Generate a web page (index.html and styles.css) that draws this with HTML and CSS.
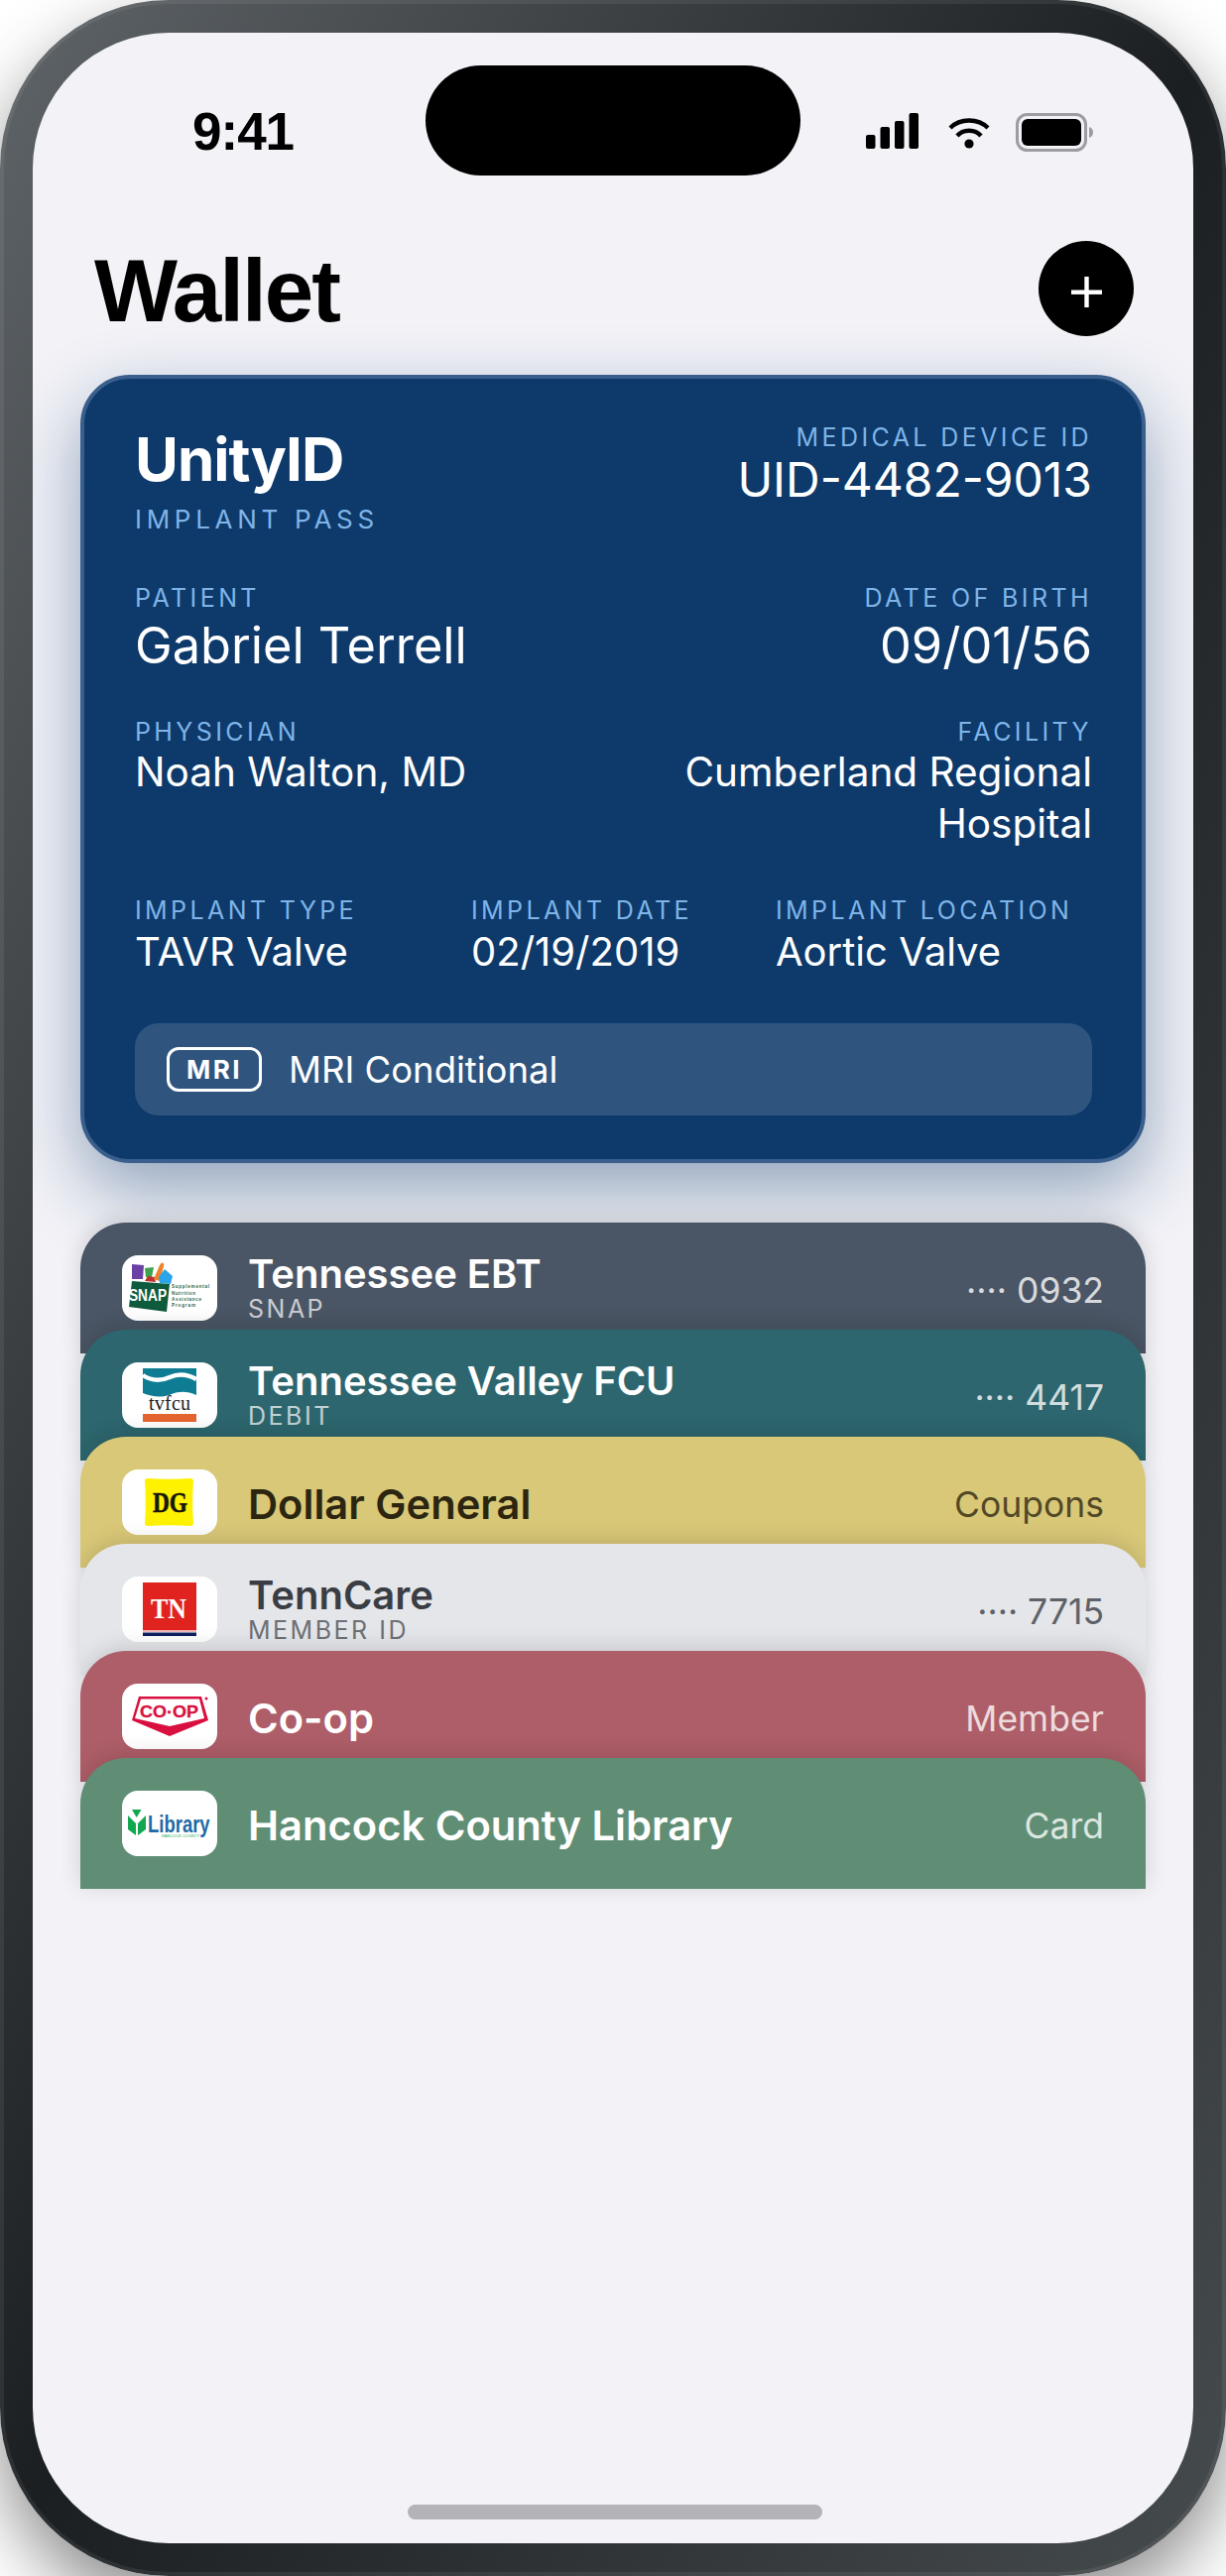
FILE: index.html
```html
<!DOCTYPE html>
<html lang="en">
<head>
  <meta charset="UTF-8">
  <title>Wallet</title>
  <link rel="stylesheet" href="styles.css">
</head>
<body>
  <div class="phone">
    <div class="screen">
      <div class="notch"></div>

      <div class="status-bar">
        <span class="time">9:41</span>
        <div class="status-icons">
          <svg class="icon-signal" width="53" height="36" viewBox="0 0 53 36">
            <rect x="0" y="22" width="9.5" height="14" rx="2"/>
            <rect x="14.5" y="14" width="9.5" height="22" rx="2"/>
            <rect x="29" y="8" width="9.5" height="28" rx="2"/>
            <rect x="43.5" y="0" width="9.5" height="36" rx="2"/>
          </svg>
          <svg class="icon-wifi" width="42" height="32" viewBox="0 0 42 32">
            <path d="M2 11 C12 1 30 1 40 11" fill="none" stroke="#000" stroke-width="4.4"/>
            <path d="M9 19 C15 12 27 12 33 19" fill="none" stroke="#000" stroke-width="4.4"/>
            <circle cx="21" cy="27" r="4.6"/>
          </svg>
          <svg class="icon-battery" width="78" height="39" viewBox="0 0 78 39">
            <rect x="1.5" y="1.5" width="69" height="36" rx="10" fill="none" stroke="#9c9ca1" stroke-width="3"/>
            <rect x="6" y="6" width="60" height="27" rx="6"/>
            <path d="M74 14 C77 15 78 17 78 19.5 C78 22 77 24 74 25 Z" fill="#9c9ca1"/>
          </svg>
        </div>
      </div>

      <div class="header">
        <h1>Wallet</h1>
        <button class="add-btn">
          <svg width="31" height="31" viewBox="0 0 31 31">
            <rect x="0" y="13.5" width="31" height="4.4" fill="#fff"/>
            <rect x="13.3" y="0" width="4.4" height="31" fill="#fff"/>
          </svg>
        </button>
      </div>

      <div class="pass">
        <div class="pass-row">
          <div>
            <div class="pass-name">UnityID</div>
            <div class="label label-pass">IMPLANT PASS</div>
          </div>
          <div class="right">
            <div class="label">MEDICAL DEVICE ID</div>
            <div class="value-id">UID-4482-9013</div>
          </div>
        </div>
        <div class="pass-row row-patient">
          <div>
            <div class="label">PATIENT</div>
            <div class="value-lg">Gabriel Terrell</div>
          </div>
          <div class="right">
            <div class="label">DATE OF BIRTH</div>
            <div class="value-lg">09/01/56</div>
          </div>
        </div>
        <div class="pass-row row-doctor">
          <div>
            <div class="label">PHYSICIAN</div>
            <div class="value">Noah Walton, MD</div>
          </div>
          <div class="right facility">
            <div class="label">FACILITY</div>
            <div class="value">Cumberland Regional Hospital</div>
          </div>
        </div>
        <div class="implant-row">
          <div>
            <div class="label">IMPLANT TYPE</div>
            <div class="value-sm">TAVR Valve</div>
          </div>
          <div>
            <div class="label">IMPLANT DATE</div>
            <div class="value-sm">02/19/2019</div>
          </div>
          <div>
            <div class="label">IMPLANT LOCATION</div>
            <div class="value-sm">Aortic Valve</div>
          </div>
        </div>
        <div class="mri-bar">
          <span class="mri-badge">MRI</span>
          <span class="mri-text">MRI Conditional</span>
        </div>
      </div>

      <div class="stack">
        <div class="card card-ebt">
          <div class="tile">
            <svg width="96" height="66" viewBox="0 0 96 66">
              <path d="M10 9 L22 10 L21 24 L10 24 Z" fill="#6b3fa3"/>
              <path d="M23 13 L32 12 L30 22 L24 22 Z" fill="#3fa34d"/>
              <path d="M23 26 L26 21 L33 22 L34 27 Z" fill="#c0322f"/>
              <path d="M32 24 L38 10 C40 6 43 7 42 11 L38 26 Z" fill="#f0812c"/>
              <path d="M37 22 L43 14 L51 21 L49 29 L38 28 Z" fill="#2ba4e9"/>
              <path d="M10 26 L48 29 L45 57 L7 52 Z" fill="#0f5b3d"/>
              <text class="snap-word" x="7" y="46" textLength="38" lengthAdjust="spacingAndGlyphs">SNAP</text>
              <text class="snap-small" x="50" y="33" textLength="38">Supplemental</text>
              <text class="snap-small" x="50" y="40" textLength="24">Nutrition</text>
              <text class="snap-small" x="50" y="46" textLength="30">Assistance</text>
              <text class="snap-small" x="50" y="52" textLength="24">Program</text>
            </svg>
          </div>
          <div class="card-text">
            <div class="card-title">Tennessee EBT</div>
            <div class="card-sub">SNAP</div>
          </div>
          <div class="card-meta">···· 0932</div>
        </div>

        <div class="card card-fcu">
          <div class="tile">
            <svg width="96" height="66" viewBox="0 0 96 66">
              <path d="M21 6 H75 V33 C66 29 58 29 50 32 C40 36 31 35 21 31 Z" fill="#0e7d94"/>
              <path d="M21 13 C30 19 39 19 48 15 C57 11 66 12 75 17" fill="none" stroke="#fff" stroke-width="4.5"/>
              <text class="fcu-word" x="27" y="48" textLength="42">tvfcu</text>
              <rect x="21" y="52" width="54" height="8" fill="#e4652f"/>
            </svg>
          </div>
          <div class="card-text">
            <div class="card-title">Tennessee Valley FCU</div>
            <div class="card-sub">DEBIT</div>
          </div>
          <div class="card-meta">···· 4417</div>
        </div>

        <div class="card card-dg">
          <div class="tile">
            <svg width="96" height="66" viewBox="0 0 96 66">
              <path d="M26 9 C40 10 55 10 69 9 C71 9 72 10 72 12 C71 26 71 40 72 54 C72 56 71 57 69 57 C55 56 40 56 26 57 C24 57 23 56 23 54 C24 40 24 26 23 12 C23 10 24 9 26 9 Z" fill="#fff200"/>
              <text class="dg-word" x="31" y="43" textLength="35" lengthAdjust="spacingAndGlyphs">DG</text>
            </svg>
          </div>
          <div class="card-text">
            <div class="card-title-lg">Dollar General</div>
          </div>
          <div class="card-meta">Coupons</div>
        </div>

        <div class="card card-tenn">
          <div class="tile">
            <svg width="96" height="66" viewBox="0 0 96 66">
              <rect x="21" y="6" width="54" height="48" fill="#e0231f"/>
              <rect x="21" y="54" width="54" height="2" fill="#f0b8b8"/>
              <rect x="21" y="56.5" width="54" height="3.5" fill="#0d1f5f"/>
              <text class="tn-word" x="29" y="42" textLength="36" lengthAdjust="spacingAndGlyphs">TN</text>
            </svg>
          </div>
          <div class="card-text">
            <div class="card-title">TennCare</div>
            <div class="card-sub">MEMBER ID</div>
          </div>
          <div class="card-meta">···· 7715</div>
        </div>

        <div class="card card-coop">
          <div class="tile">
            <svg width="96" height="66" viewBox="0 0 96 66">
              <path d="M17 13 H80 L87 37 L48 53 L10 37 Z" fill="#d9103f"/>
              <path d="M19 15.5 H78 L83 35 L48 43 L13 35 Z" fill="#fff"/>
              <text class="coop-word" x="18" y="34" textLength="59" lengthAdjust="spacingAndGlyphs">CO·OP</text>
              <circle cx="85" cy="15" r="1.5" fill="#d9103f"/>
            </svg>
          </div>
          <div class="card-text">
            <div class="card-title-lg">Co-op</div>
          </div>
          <div class="card-meta">Member</div>
        </div>

        <div class="card card-lib">
          <div class="tile">
            <svg width="96" height="66" viewBox="0 0 96 66">
              <path d="M10 19 H19.5 L14.7 27 Z" fill="#12a84f"/>
              <path d="M6 25 L14 33 V45 L6 39 Z" fill="#12a84f"/>
              <path d="M24 25 L16 33 V45 L24 39 Z" fill="#12a84f"/>
              <text class="lib-word" transform="translate(26 42) scale(0.77 1)">Library</text>
              <text class="lib-small" x="40" y="46.5" textLength="38">HANCOCK COUNTY</text>
            </svg>
          </div>
          <div class="card-text">
            <div class="card-title-lg">Hancock County Library</div>
          </div>
          <div class="card-meta">Card</div>
        </div>
      </div>

      <div class="home-bar"></div>
    </div>
  </div>
</body>
</html>
```

FILE: styles.css
```css
* {
  box-sizing: border-box;
  margin: 0;
  padding: 0;
}

body {
  width: 1236px;
  height: 2598px;
  overflow: hidden;
  background: #fff;
  font-family: Inter, "Liberation Sans", sans-serif;
}

.phone {
  width: 1236px;
  height: 2598px;
  padding: 33px;
  border-radius: 170px;
  background: linear-gradient(to bottom right, #5f6468 0%, #1b1f22 50%, #464b4e 100%);
  box-shadow: inset 0 0 0 4px rgba(255, 255, 255, 0.07), 0 30px 70px rgba(0, 0, 0, 0.45);
}

.screen {
  position: relative;
  height: 2532px;
  padding: 0 48px;
  border-radius: 137px;
  background: #f2f2f7;
  overflow: hidden;
}

.notch {
  position: absolute;
  top: 33px;
  left: 396px;
  width: 378px;
  height: 111px;
  border-radius: 56px;
  background: #000;
}

.status-bar {
  display: flex;
  justify-content: space-between;
  align-items: flex-start;
  height: 210px;
  padding: 70px 53px 0 113px;
}

.time {
  font-family: "Liberation Sans", Arial, sans-serif;
  font-size: 53px;
  line-height: 60px;
  font-weight: 700;
  letter-spacing: -1px;
  color: #000;
}

.status-icons {
  display: flex;
  align-items: flex-start;
  padding-top: 11px;
}

.icon-signal { margin-right: 30px; }
.icon-wifi { margin-right: 26px; margin-top: 4px; }

.header {
  display: flex;
  justify-content: space-between;
  height: 135px;
  padding: 0 12px 0 14px;
}

.header h1 {
  font-family: "Liberation Sans", Arial, sans-serif;
  font-size: 89px;
  line-height: 100px;
  font-weight: 700;
  letter-spacing: -2px;
  color: #000;
}

.add-btn {
  display: flex;
  align-items: center;
  justify-content: center;
  width: 96px;
  height: 96px;
  padding-top: 7px;
  border: none;
  border-radius: 50%;
  background: #000;
}

.pass {
  height: 795px;
  padding: 44px 50px 0 51px;
  border: 4px solid #3a5f8c;
  border-radius: 50px;
  background: #0d3a6b;
  color: #fff;
  box-shadow: 0 28px 70px rgba(13, 58, 107, 0.42);
}

.pass-row {
  display: flex;
  justify-content: space-between;
}

.right { text-align: right; }

.row-patient { margin-top: 49px; }
.row-doctor { margin-top: 40px; }

.facility { width: 440px; }

.pass-name {
  margin-top: 6px;
  font-size: 60px;
  line-height: 62px;
  font-weight: 700;
  letter-spacing: -1px;
}

.label {
  font-size: 25px;
  line-height: 30px;
  letter-spacing: 3.4px;
  color: #7fb4e8;
}

.label-pass {
  margin-top: 15px;
  font-size: 26px;
  letter-spacing: 4.7px;
}

.value-id {
  font-size: 48px;
  line-height: 55px;
}

.value-lg {
  font-size: 50.5px;
  line-height: 65px;
}

.value {
  font-size: 40.5px;
  line-height: 52px;
}

.value-sm {
  font-size: 40px;
  line-height: 53px;
}

.implant-row {
  display: grid;
  grid-template-columns: 339px 307px 1fr;
  margin-top: 46px;
}

.mri-bar {
  display: flex;
  align-items: center;
  height: 93px;
  margin-top: 46px;
  padding-left: 32px;
  border-radius: 24px;
  background: rgba(255, 255, 255, 0.14);
}

.mri-badge {
  width: 96px;
  height: 45px;
  margin-right: 27px;
  border: 3px solid #fff;
  border-radius: 12px;
  font-size: 26px;
  line-height: 39px;
  font-weight: 700;
  letter-spacing: 2.5px;
  text-align: center;
}

.mri-text {
  font-size: 36.5px;
}

.stack {
  margin-top: 60px;
}

.card {
  position: relative;
  display: flex;
  align-items: flex-start;
  height: 132px;
  margin-bottom: -24px;
  padding: 33px 42px 0;
  border-radius: 46px 46px 0 0;
  color: #fff;
  box-shadow: 0 -3px 22px rgba(0, 0, 0, 0.14);
}

.card-ebt { background: #4a5565; }
.card-fcu { background: #2d666e; }
.card-dg { background: #d9c878; color: #2c2510; }
.card-tenn { background: #e5e6ea; color: #3a3d44; }
.card-coop { background: #ae5e68; }
.card-lib { background: #5f8e75; }

.tile {
  width: 96px;
  height: 66px;
  border-radius: 16px;
  background: #fff;
  flex-shrink: 0;
}

.tile svg { display: block; }

.card-text {
  flex: 1;
  height: 66px;
  margin-left: 31px;
}

.card-title {
  margin-top: -3px;
  font-size: 40px;
  line-height: 44px;
  font-weight: 600;
}

.card-title-lg {
  margin-top: 2px;
  font-size: 41.7px;
  line-height: 66px;
  font-weight: 600;
}

.card-sub {
  margin-top: 1px;
  font-size: 25px;
  line-height: 24px;
  letter-spacing: 2.5px;
  opacity: 0.7;
}

.card-meta {
  margin-top: 10px;
  font-size: 35.5px;
  line-height: 52px;
  opacity: 0.78;
}

.home-bar {
  position: absolute;
  left: 378px;
  bottom: 24px;
  width: 418px;
  height: 15px;
  border-radius: 8px;
  background: #b4b3b8;
}

.snap-word { font: 700 16px "Liberation Sans", sans-serif; fill: #fff; }
.snap-small { font: 700 4.6px "Liberation Sans", sans-serif; fill: #2c6a4e; }
.fcu-word { font: 400 20px "Liberation Serif", serif; fill: #222; }
.dg-word { font: 700 30px "Liberation Serif", serif; fill: #17160a; stroke: #17160a; stroke-width: 0.6px; }
.tn-word { font: 700 30px "Liberation Serif", serif; fill: #fff; }
.coop-word { font: 700 16.5px "Liberation Sans", sans-serif; fill: #d9103f; stroke: #d9103f; stroke-width: 0.3px; }
.lib-word { font: 700 24px "Liberation Sans", sans-serif; fill: #1e6aa6; }
.lib-small { font: 400 3.8px "Liberation Sans", sans-serif; fill: #12a84f; }
```
